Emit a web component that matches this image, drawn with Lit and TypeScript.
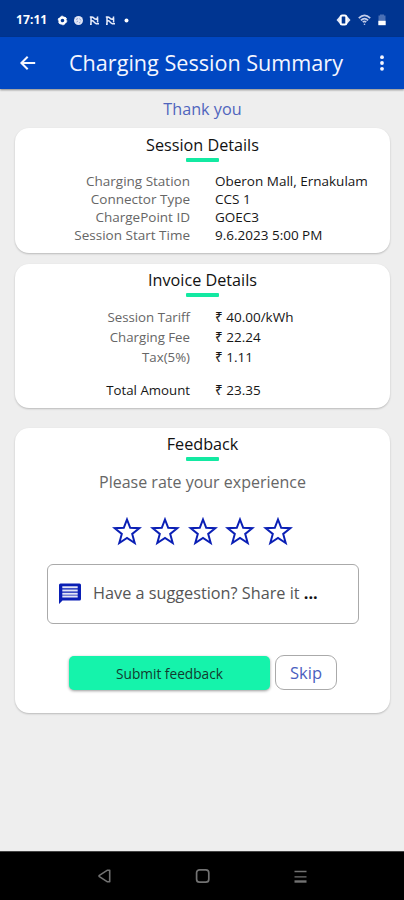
import { LitElement, html, css, svg } from "lit";
import { customElement } from "lit/decorators.js";

interface Row {
  label: string;
  value: string;
  total?: boolean;
}

const SESSION: Row[] = [
  { label: "Charging Station", value: "Oberon Mall, Ernakulam" },
  { label: "Connector Type", value: "CCS 1" },
  { label: "ChargePoint ID", value: "GOEC3" },
  { label: "Session Start Time", value: "9.6.2023 5:00 PM" },
];

const INVOICE: Row[] = [
  { label: "Session Tariff", value: "₹ 40.00/kWh" },
  { label: "Charging Fee", value: "₹ 22.24" },
  { label: "Tax(5%)", value: "₹ 1.11" },
  { label: "Total Amount", value: "₹ 23.35", total: true },
];

@customElement("status-bar")
class StatusBar extends LitElement {
  static styles = css`
    :host {
      display: flex;
      align-items: center;
      height: 37px;
      padding: 3px 18px 0 16px;
      box-sizing: border-box;
      background: #003591;
      color: #fff;
    }
    .time {
      width: 41px;
      font: 700 12px/16px "Noto Sans", sans-serif;
      letter-spacing: 0.1px;
    }
    .left {
      display: flex;
      gap: 5px;
      flex: 1;
    }
    .right {
      display: flex;
      align-items: center;
      gap: 7px;
    }
    svg {
      display: block;
    }
  `;
  render() {
    const wave = svg`<path d="M0.800 1.900H2.500Q4 1.900 4.700 3T7 4.200Q8.600 4.200 8.600 1.500M8.600 3V7.500M2 2V6M1 9.300H2V6.500Q3.200 5 4.800 6.800T7.300 8.800H10" fill="none" stroke="#e6ebfa" stroke-width="1.500"/>`;
    return html`
      <span class="time">17:11</span>
      <div class="left">
        <svg width="11" height="11" viewBox="0 0 11 11">
          <circle cx="5.500" cy="5.500" r="3" fill="none" stroke="#fff" stroke-width="2.400" />
          <circle cx="5.500" cy="5.500" r="4.300" fill="none" stroke="#fff" stroke-width="1" stroke-dasharray="2.200 2.300" />
        </svg>
        <svg width="11" height="11" viewBox="0 0 11 11">
          <circle cx="5.500" cy="5.500" r="4.500" fill="#dfe5f6" />
          <path d="M3 4.500L5 3.500M6.500 3.500L8 5.500M3.500 7L5 6M6 8L7.500 7" stroke="#7c90c8" stroke-width="0.800" />
        </svg>
        <svg width="11" height="11" viewBox="0 0 11 11">${wave}</svg>
        <svg width="11" height="11" viewBox="0 0 11 11">${wave}</svg>
        <svg width="11" height="11" viewBox="0 0 11 11"><circle cx="5.500" cy="5.500" r="2" fill="#fff" /></svg>
      </div>
      <div class="right">
        <svg width="15" height="12" viewBox="0 0 15 12">
          <path d="M4.500 1.500L0.500 6L4.500 10.500ZM10.500 1.500L14.500 6L10.500 10.500Z" fill="#dfe5f6" />
          <rect x="4.700" y="1.500" width="5.600" height="9" rx="1.500" fill="#003591" stroke="#fff" stroke-width="2" />
        </svg>
        <svg width="13" height="12" viewBox="0 0 13 12" fill="none" stroke="#c3cdea" stroke-width="1.700">
          <path d="M0.800 4.200Q6.500 -1.600 12.200 4.200M2.900 6.300Q6.500 2.700 10.100 6.300M4.800 8.200Q6.500 6.600 8.200 8.200" />
          <circle cx="6.500" cy="10.300" r="0.800" fill="#c3cdea" stroke="none" />
        </svg>
        <svg width="8" height="12" viewBox="0 0 8 12">
          <path d="M0.500 1.500H2V0.500H6V1.500H7.500V7H0.500Z" fill="#4b70b5" />
          <rect x="0.300" y="6.800" width="7.400" height="4.400" fill="#fff" />
        </svg>
      </div>
    `;
  }
}

@customElement("title-bar")
class TitleBar extends LitElement {
  static styles = css`
    :host {
      display: flex;
      align-items: center;
      height: 52px;
      padding: 0 20px 0 18px;
      box-sizing: border-box;
      background: #0047c2;
      box-shadow: 0 1px 2px rgba(0, 0, 0, 0.45);
      color: #f4f6ff;
      position: relative;
    }
    h1 {
      flex: 1;
      margin: 0 0 0 32px;
      font: 400 21.600px/30px "Open Sans", sans-serif;
      white-space: nowrap;
    }
    svg {
      display: block;
    }
  `;
  render() {
    return html`
      <svg width="19" height="18" viewBox="0 0 19 18" fill="none" stroke="#f4f6ff" stroke-width="2">
        <path d="M17.200 9H3M9.700 2.700L3.400 9L9.700 15.300" />
      </svg>
      <h1>Charging Session Summary</h1>
      <svg width="4" height="16" viewBox="0 0 4 16" fill="#f4f6ff">
        <circle cx="2" cy="2.200" r="1.900" />
        <circle cx="2" cy="8" r="1.900" />
        <circle cx="2" cy="13.800" r="1.900" />
      </svg>
    `;
  }
}

@customElement("info-card")
class InfoCard extends LitElement {
  static properties = {
    heading: { type: String },
    rows: { attribute: false },
  };
  declare heading: string;
  declare rows: Row[];
  static styles = css`
    :host {
      display: block;
      box-sizing: border-box;
      background: #fff;
      border-radius: 14px;
      box-shadow: 0 1px 2px rgba(0, 0, 0, 0.22);
      padding-top: var(--top, 6px);
      font-family: "Open Sans", "Noto Sans", sans-serif;
    }
    h2 {
      margin: 0;
      font-weight: 400;
      font-size: 16.200px;
      line-height: 22px;
      text-align: center;
      color: #111;
    }
    .bar {
      width: 33px;
      height: 4px;
      margin: 2px auto 0;
      border-radius: 1px;
      background: #13e9a2;
    }
    .rows {
      margin-top: 10px;
    }
    .row {
      display: grid;
      grid-template-columns: 175px 1fr;
      column-gap: 25px;
      font-size: var(--label-size, 13.500px);
      line-height: var(--row, 18px);
      white-space: nowrap;
    }
    .label {
      text-align: right;
      color: #666;
    }
    .value {
      color: #161616;
      font-size: 13.500px;
    }
    .total {
      margin-top: 13px;
    }
    .total .label {
      color: #161616;
    }
  `;
  render() {
    return html`
      <h2>${this.heading}</h2>
      <div class="bar"></div>
      ${this.rows
        ? html`<div class="rows">
            ${this.rows.map(
              (r) => html`<div class="row ${r.total ? "total" : ""}">
                <span class="label">${r.label}</span><span class="value">${r.value}</span>
              </div>`
            )}
          </div>`
        : ""}
      <slot></slot>
    `;
  }
}

@customElement("nav-bar")
class NavBar extends LitElement {
  static styles = css`
    :host {
      display: flex;
      align-items: center;
      justify-content: space-between;
      height: 49px;
      padding: 0 97px;
      box-sizing: border-box;
      background: #000;
      border-top: 1px solid #444;
    }
  `;
  render() {
    return html`
      <svg width="15" height="16" viewBox="0 0 15 16" fill="none" stroke="#727272" stroke-width="1.600">
        <path d="M12.700 2.200V13.800H10.500L2.400 8.600Q1.700 8 2.400 7.400L10.500 2.200Z" stroke-linejoin="round" />
      </svg>
      <svg width="16" height="16" viewBox="0 0 16 16" fill="none" stroke="#727272" stroke-width="1.700">
        <rect x="1.600" y="1.800" width="12.200" height="12.400" rx="3" />
      </svg>
      <svg width="13" height="16" viewBox="0 0 13 16" stroke="#727272">
        <path d="M0.500 3.500H12.500M0.500 8.800H12.500" stroke-width="1.300" />
        <path d="M0.500 13.500H12.500" stroke-width="2.400" />
      </svg>
    `;
  }
}

@customElement("app-root")
class AppRoot extends LitElement {
  static styles = css`
    :host {
      display: flex;
      flex-direction: column;
      height: 900px;
      background: #eee;
      overflow: hidden;
      font-family: "Open Sans", "Noto Sans", sans-serif;
    }
    main {
      flex: 1;
      padding: 8px 14px 0 15px;
    }
    .thanks {
      margin: 0 0 7px;
      font-size: 16.200px;
      line-height: 24px;
      text-align: center;
      color: #5065bd;
    }
    .session {
      height: 125px;
    }
    .invoice {
      height: 144px;
      margin-top: 11px;
      --top: 5px;
      --row: 20px;
      --label-size: 13.250px;
    }
    .feedback {
      height: 285px;
      margin-top: 20px;
      --top: 5px;
    }
    .prompt {
      margin: 10px 0 0;
      font-size: 16px;
      line-height: 22px;
      text-align: center;
      color: #666;
    }
    .stars {
      display: flex;
      justify-content: center;
      gap: 7.700px;
      margin-top: 24px;
    }
    .stars svg {
      display: block;
    }
    .suggest {
      display: flex;
      align-items: center;
      box-sizing: border-box;
      width: 312px;
      height: 60px;
      margin: 18px 0 0 32px;
      padding-left: 10px;
      border: 1px solid #aaa;
      border-radius: 6px;
      font-size: 16.250px;
      color: #555;
      gap: 11px;
      white-space: nowrap;
    }
    .suggest span {
      margin-top: -2px;
    }
    .dots {
      color: #111;
    }
    .actions {
      display: flex;
      gap: 5px;
      margin: 31px 0 0 54px;
    }
    button {
      box-sizing: border-box;
      height: 35px;
      padding: 0;
      font-family: inherit;
      white-space: nowrap;
    }
    .submit {
      width: 201px;
      height: 34px;
      margin-top: 1px;
      border: 0;
      border-radius: 5px;
      background: #15f3ab;
      box-shadow: 0 1px 3px rgba(0, 0, 0, 0.4);
      color: #123a2e;
      font-size: 13.700px;
    }
    .skip {
      width: 62px;
      border: 1px solid #aaa;
      border-radius: 9px;
      background: #fff;
      color: #4b5fc0;
      font-size: 16.500px;
    }
  `;
  render() {
    return html`
      <status-bar></status-bar>
      <title-bar></title-bar>
      <main>
        <p class="thanks">Thank you</p>
        <info-card class="session" heading="Session Details" .rows=${SESSION}></info-card>
        <info-card class="invoice" heading="Invoice Details" .rows=${INVOICE}></info-card>
        <info-card class="feedback" heading="Feedback">
          <p class="prompt">Please rate your experience</p>
          <div class="stars">
            ${[1, 2, 3, 4, 5].map(
              () => html`<svg width="30" height="29" viewBox="0 0 30 29">
                <path
                  d="M15 2.500L18.200 10.800L27.300 11.200L20.200 16.900L22.700 26L15 21L7.300 26L9.800 16.900L2.700 11.200L11.800 10.800Z"
                  fill="none"
                  stroke="#0a1fb5"
                  stroke-width="2"
                />
              </svg>`
            )}
          </div>
          <div class="suggest">
            <svg width="24" height="24" viewBox="0 0 24 24">
              <path
                d="M2.500 1.500H21.500Q23 1.500 23 3V17Q23 18.500 21.500 18.500H4.500L1 22V3Q1 1.500 2.500 1.500Z"
                fill="#0a1fb5"
              />
              <path d="M4.300 5.300H19.700M4.300 8.500H19.700M4.300 11.700H19.700M4.300 14.600H19.700" stroke="#e3e6f7" stroke-width="2" />
            </svg>
            <span>Have a suggestion? Share it <b class="dots">...</b></span>
          </div>
          <div class="actions">
            <button class="submit">Submit feedback</button>
            <button class="skip">Skip</button>
          </div>
        </info-card>
      </main>
      <nav-bar></nav-bar>
    `;
  }
}
